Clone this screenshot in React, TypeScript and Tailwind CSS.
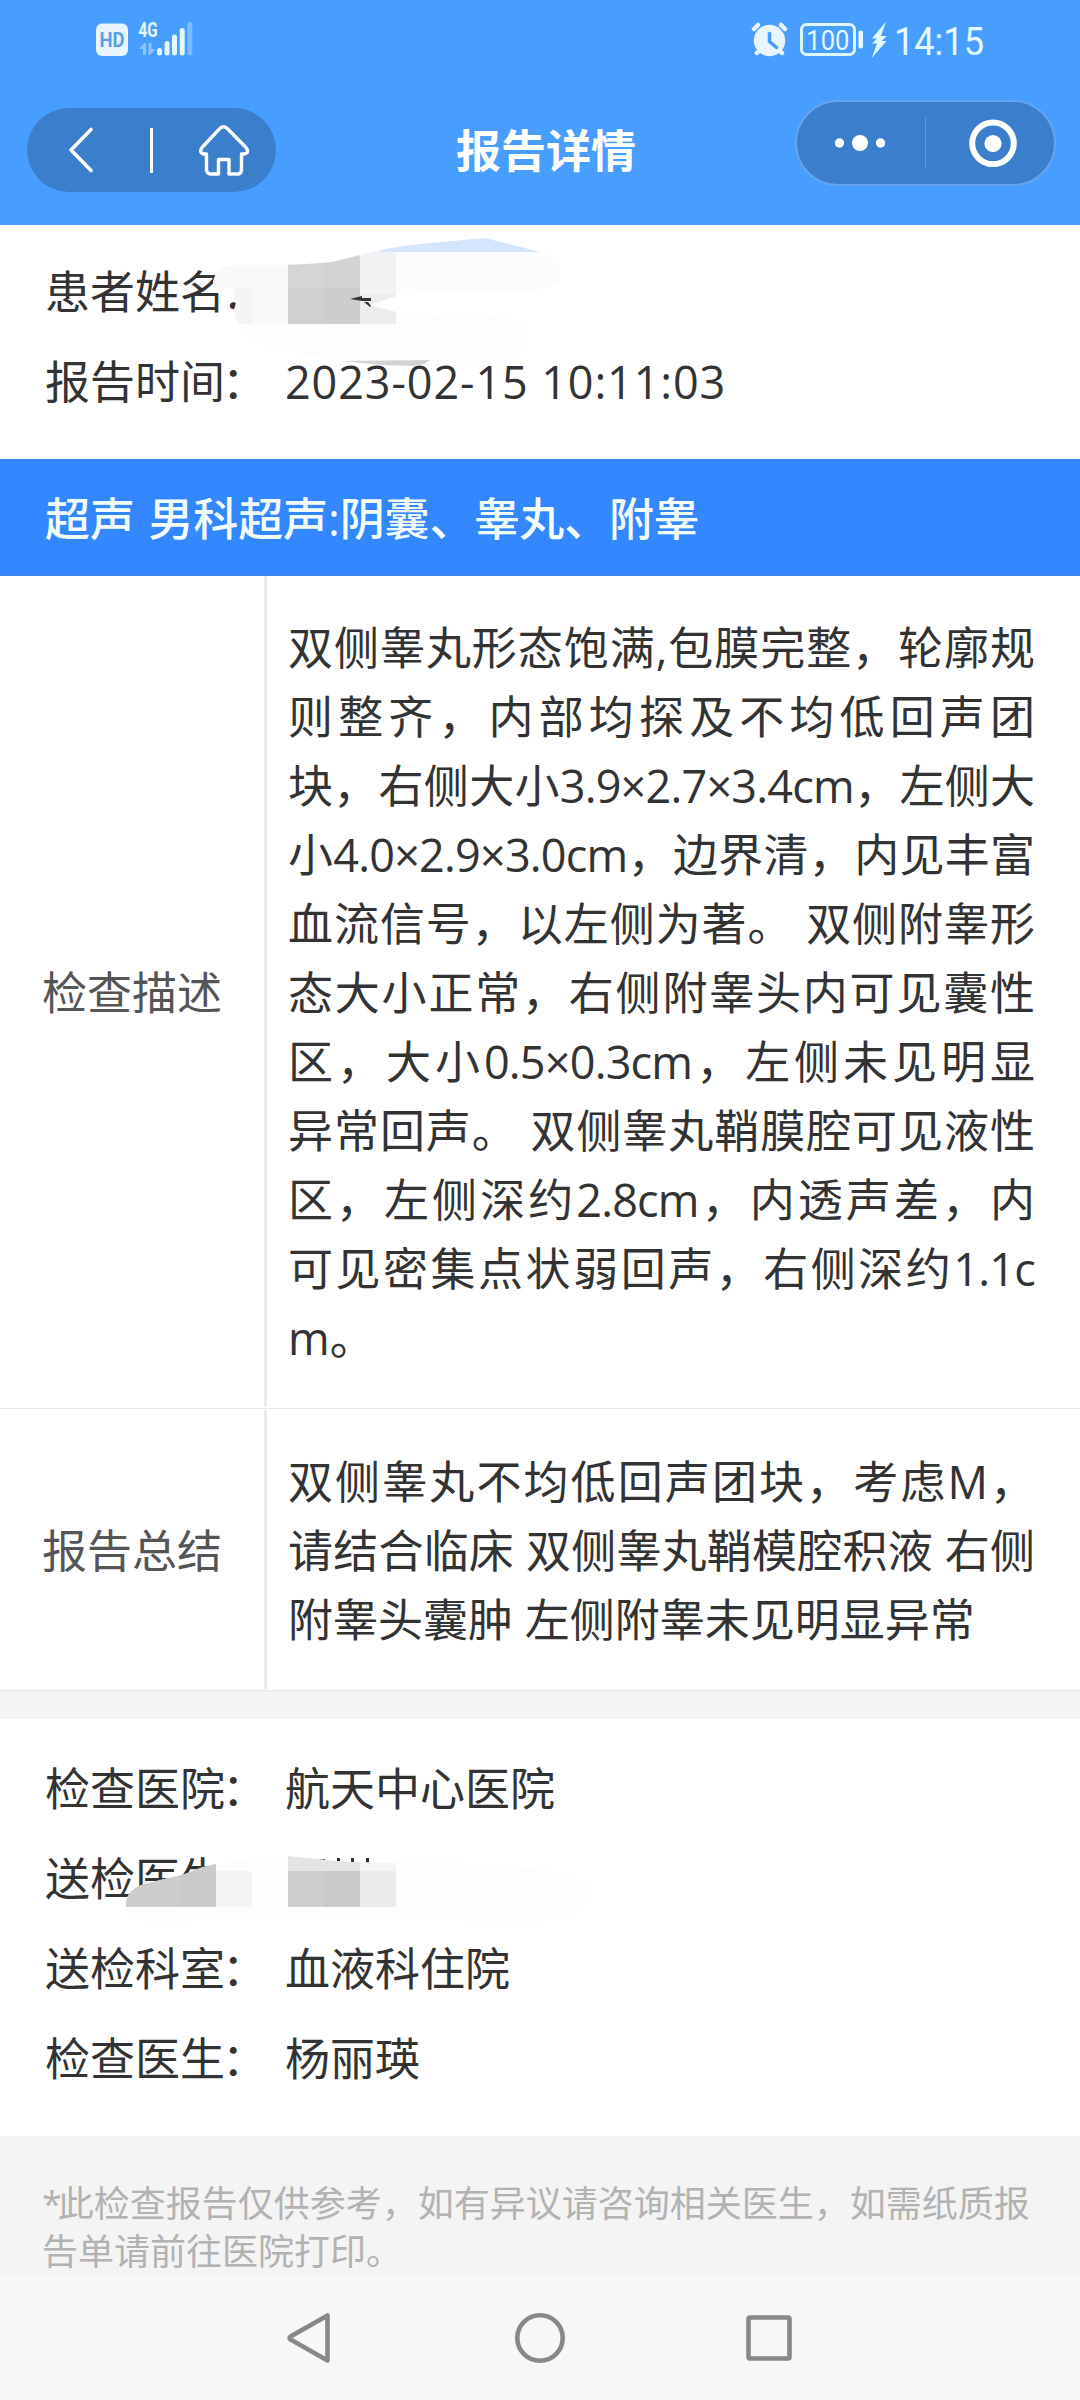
import React from 'react';

const description = [
  '双侧睾丸形态饱满,包膜完整，轮廓规',
  '则整齐，内部均探及不均低回声团',
  '块，右侧大小3.9×2.7×3.4cm，左侧大',
  '小4.0×2.9×3.0cm，边界清，内见丰富',
  '血流信号，以左侧为著。 双侧附睾形',
  '态大小正常，右侧附睾头内可见囊性',
  '区，大小0.5×0.3cm，左侧未见明显',
  '异常回声。 双侧睾丸鞘膜腔可见液性',
  '区，左侧深约2.8cm，内透声差，内',
  '可见密集点状弱回声，右侧深约1.1c',
  'm。',
];

const summary = [
  '双侧睾丸不均低回声团块，考虑M，',
  '请结合临床 双侧睾丸鞘模腔积液 右侧',
  '附睾头囊肿 左侧附睾未见明显异常',
];

/* Measurements are set slightly tighter than the surrounding Chinese text. */
function tightenLatin(line: string) {
  return line.split(/([0-9.×cm]{2,})/).map((part, i) =>
    i % 2 ? (
      <span key={i} className="tracking-[-0.8px]">
        {part}
      </span>
    ) : (
      part
    ),
  );
}

function Lines({ lines }: { lines: string[] }) {
  return (
    <div className="w-[747px] text-[45px] leading-[69px] text-[#333]">
      {lines.map((line, i) => (
        <p
          key={i}
          className={
            i === lines.length - 1
              ? 'whitespace-nowrap'
              : 'whitespace-nowrap [text-align-last:justify]'
          }
        >
          {tightenLatin(line)}
        </p>
      ))}
    </div>
  );
}

function TableRow({ label, lines }: { label: string; lines: string[] }) {
  return (
    <div className="flex border-b border-[#e8e8eb] bg-white pb-px">
      <div className="flex w-[267px] items-center justify-center border-r-3 border-[#ebebed] pt-px text-[45px] text-[#555]">
        {label}
      </div>
      <div className="pt-[37px] pb-[35px] pl-[21px]">
        <Lines lines={lines} />
      </div>
    </div>
  );
}

function InfoRow({ label, value, colon = true }: { label: string; value?: string; colon?: boolean }) {
  return (
    <div className="flex h-[90px] items-center text-[45px] leading-[90px] text-[#333]">
      <span className="w-[240px] whitespace-nowrap">
        {label}
        {colon && <span className="-ml-[3px]">：</span>}
      </span>
      <span className="whitespace-nowrap">{value}</span>
    </div>
  );
}

function StatusBar() {
  return (
    <div className="flex h-20 items-center justify-between pr-[84px] pl-[96px]">
      <svg width="100" height="80" viewBox="96 0 100 80">
        <rect x="96" y="23.5" width="32" height="32.5" rx="6" fill="#e8f4ff" />
        <text x="112" y="47.300" textAnchor="middle" fontSize="21" fontWeight="700" fontFamily="Roboto" textLength="25" lengthAdjust="spacingAndGlyphs" fill="#5a9fe6">HD</text>
        <text x="138.500" y="37" fontSize="21" fontWeight="700" fontFamily="Roboto" textLength="19" lengthAdjust="spacingAndGlyphs" fill="#e4f8ff">4G</text>
        <path d="M139 49l5.500-6h1.500v12h-3v-6zM148.500 43h3v6h4l-5.500 6h-1.500z" fill="#8cc3ff" />
        <g fill="#e4f8ff">
          <rect x="157" y="48" width="5" height="7.500" rx="2.500" />
          <rect x="164.500" y="41" width="5" height="14.500" rx="2.500" />
          <rect x="172" y="34.500" width="5" height="21" rx="2.500" />
          <rect x="179.700" y="28" width="5" height="27.500" rx="2.500" />
        </g>
        <rect x="187.300" y="22" width="5" height="33.500" rx="2.500" fill="#7dbaff" />
      </svg>
      <svg width="248" height="80" viewBox="748 0 248 80">
        <g stroke="#e8f4ff" strokeWidth="4.500" strokeLinecap="round" fill="none">
          <path d="M754 29l4-4M785 29l-4-4M757 53l4-4M782 53l-4-4" />
        </g>
        <circle cx="769.500" cy="40.500" r="15.700" fill="#e8f4ff" />
        <path d="M769.500 33.500v8l7 6" stroke="#489eff" strokeWidth="3.600" strokeLinecap="round" fill="none" />
        <rect x="801.500" y="24.500" width="53" height="30" rx="5" fill="none" stroke="#def5ff" strokeWidth="3" />
        <text x="827.800" y="50" textAnchor="middle" fontSize="28" fontFamily="Roboto" textLength="43" lengthAdjust="spacingAndGlyphs" fill="#e4f8ff">100</text>
        <rect x="858.500" y="30.500" width="4.500" height="18" rx="2" fill="#e4f8ff" />
        <path d="M886 21.500L872 38.500h5l-5 5h5l-5.200 14.500L886.500 41h-5l5.500-5h-6z" fill="#e4f8ff" />
        <text x="894" y="54.500" fontSize="38" fontFamily="Roboto" textLength="90" lengthAdjust="spacingAndGlyphs" fill="#e4f8ff">14:15</text>
      </svg>
    </div>
  );
}

function Header() {
  return (
    <header className="h-[225px] bg-[#489eff]">
      <StatusBar />
      <div className="flex h-[126px] items-start pr-6 pl-[27px]">
        <div className="mt-7 h-[84px] w-[249px] rounded-full bg-[#3b7fcc]">
          <svg width="249" height="84" viewBox="27 108 249 84" fill="none" stroke="white" strokeLinecap="round" strokeLinejoin="round">
            <path d="M91 129.500L71 150l20 20.500" strokeWidth="3.600" />
            <path d="M151.500 128v45" strokeWidth="3" strokeLinecap="butt" />
            <path d="M220 128.300q3.500-3.200 7 0L246 147.500q4 5.500-2 6.500h-2.500v16q-.5 4-4 4h-8.500v-14.500h-10.500v14.500h-8.500q-3-.5-3.500-4v-16h-3q-5-1.500-1.500-6.500z" strokeWidth="3.400" />
          </svg>
        </div>
        <h1 className="mt-12 flex-1 pl-[180px] text-[45px] leading-[46px] font-bold whitespace-nowrap text-white">报告详情</h1>
        <div className="mt-5 h-[86px] w-[261px] rounded-full border-2 border-[#65a5ef] bg-[#3b7fcc]">
          <svg width="257" height="82" viewBox="797 102 257 82" fill="white">
            <circle cx="839.500" cy="143" r="4.700" />
            <circle cx="860" cy="143" r="8" />
            <circle cx="880.500" cy="143" r="4.700" />
            <path d="M925.500 117v51" stroke="#5e97da" strokeWidth="1" />
            <circle cx="993" cy="143.300" r="20.800" fill="none" stroke="white" strokeWidth="6" />
            <circle cx="993" cy="143.500" r="8.600" />
          </svg>
        </div>
      </div>
    </header>
  );
}

/* Pixelated redaction stroke over the patient's name. */
function NameMosaic() {
  return (
    <svg className="absolute top-0 left-0" width="600" height="234" viewBox="0 225 600 234">
      <defs>
        <clipPath id="name-brush">
          <path d="M213 283Q216 265 232 265Q290 266 332 262L360 255Q385 248 420 244L485 238L540 252Q562 260 560 278Q555 290 520 291L400 295L370 305L400 313L430 316Q515 310 527 330Q528 350 505 360Q470 366 430 361Q420 366 405 365Q370 365 343 360Q290 354 265 346Q238 334 234 310L237 300Q217 300 213 283Z" />
        </clipPath>
      </defs>
      <g clipPath="url(#name-brush)">
        <rect x="210" y="236" width="360" height="135" fill="#fdfdfe" />
        <rect x="210" y="256" width="78" height="32" fill="#f8f9fb" />
        <rect x="234" y="288" width="54" height="36" fill="#f5f5f5" />
        <rect x="252" y="288" width="36" height="36" fill="#f9f9f9" />
        <rect x="288" y="236" width="36" height="52" fill="#d4d5d7" />
        <rect x="324" y="236" width="36" height="52" fill="#d2d3d5" />
        <rect x="288" y="288" width="36" height="36" fill="#d0d0d0" />
        <rect x="324" y="288" width="36" height="36" fill="#cdcdcd" />
        <rect x="360" y="236" width="36" height="58" fill="#f1f2f4" />
        <rect x="360" y="294" width="36" height="30" fill="#ededed" />
        <rect x="380" y="236" width="170" height="16" fill="#d3e6fb" />
        <rect x="396" y="252" width="168" height="38" fill="#fbfcfe" />
        <rect x="288" y="324" width="250" height="36" fill="#fdfdfd" />
      </g>
      <path d="M342 361l88-1-6 4-12 2-30-1z" fill="#d2d2d2" />
      <path d="M350 299l12-3v2h9v3h-9zM364 302h4l3 4-1 1z" fill="#333" />
    </svg>
  );
}

/* Pixelated redaction stroke over the referring doctor's name. */
function DoctorMosaic() {
  return (
    <svg className="absolute top-0 left-0" width="640" height="240" viewBox="0 1720 640 240">
      <g fill="#333">
        <rect x="318" y="1860" width="7" height="2" />
        <rect x="337" y="1859" width="3" height="5" />
        <rect x="351" y="1859" width="3" height="5" />
        <rect x="366" y="1859" width="3" height="6" />
      </g>
      <defs>
        <clipPath id="doctor-brush">
          <path d="M126 1903Q128 1890 144 1885L185 1875Q205 1866 222 1864Q250 1858 288 1857L316 1860Q350 1864 396 1864Q500 1862 560 1874Q590 1882 592 1898Q580 1922 520 1923L300 1918L150 1923Q130 1922 126 1908Z" />
        </clipPath>
      </defs>
      <g clipPath="url(#doctor-brush)">
        <rect x="120" y="1850" width="480" height="80" fill="#fdfdfd" />
        <rect x="120" y="1850" width="60" height="58" fill="#cdcdcd" />
        <rect x="180" y="1850" width="36" height="58" fill="#cacaca" />
        <rect x="216" y="1872" width="36" height="36" fill="#f4f4f4" />
        <rect x="288" y="1850" width="72" height="22" fill="#e4e4e4" />
        <rect x="288" y="1872" width="36" height="36" fill="#cfcfcf" />
        <rect x="324" y="1872" width="36" height="36" fill="#cacaca" />
        <rect x="360" y="1850" width="36" height="22" fill="#f5f5f5" />
        <rect x="360" y="1872" width="36" height="36" fill="#ebebeb" />
      </g>
    </svg>
  );
}

export default function App() {
  return (
    <div className="flex h-[2400px] w-[1080px] flex-col overflow-hidden bg-[#f4f4f4] font-['Open_Sans','Noto_Sans_CJK_SC',sans-serif]">
      <Header />
      <section className="relative h-[234px] bg-white pt-[22px] pl-[45px]">
        <InfoRow label="患者姓名" />
        <div className="[&_span:last-child]:tracking-[0.88px]">
          <InfoRow label="报告时间" value="2023-02-15 10:11:03" />
        </div>
        <NameMosaic />
      </section>
      <h2 className="flex h-[117px] items-center bg-[#3388ff] pt-[3px] pl-[45px] text-[45px] font-medium tracking-[-0.1px] whitespace-nowrap text-[#f2fcff] [word-spacing:2px]">
        超声 男科超声:阴囊、睾丸、附睾
      </h2>
      <div className="flex flex-col gap-px border-t border-[#4488e8] bg-white">
        <TableRow label="检查描述" lines={description} />
        <TableRow label="报告总结" lines={summary} />
      </div>
      <section className="relative mt-7 h-[417px] bg-white pt-[25px] pl-[45px]">
        <InfoRow label="检查医院" value="航天中心医院" />
        <InfoRow label="送检医生" colon={false} />
        <InfoRow label="送检科室" value="血液科住院" />
        <InfoRow label="检查医生" value="杨丽瑛" />
        <DoctorMosaic />
      </section>
      <footer className="flex-1 px-[42px] pt-[44px] text-[36px] leading-[48px] whitespace-nowrap text-[#b2b2b2]">
        <p>
          <span className="tracking-[-4px]">*</span>此检查报告仅供参考，如有异议请咨询相关医生，如需纸质报
        </p>
        <p>告单请前往医院打印。</p>
      </footer>
      <nav className="flex h-[124px] justify-center bg-[#f7f7f7]">
        <svg width="600" height="124" viewBox="240 2276 600 124" fill="none" stroke="#888" strokeWidth="4.600" strokeLinejoin="round">
          <path d="M327.500 2315.500v45L290.500 2339.500q-1.800-1.500 0-3z" />
          <circle cx="540" cy="2338" r="22.700" />
          <rect x="748.500" y="2317.500" width="41" height="41" rx="1.500" />
        </svg>
      </nav>
    </div>
  );
}
